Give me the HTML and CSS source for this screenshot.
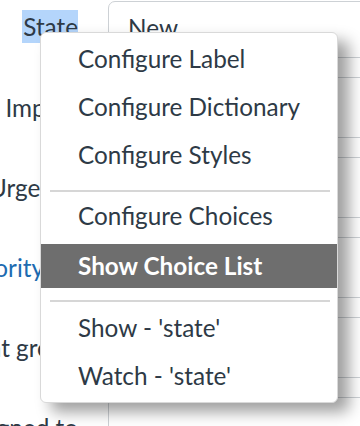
FILE: index.html
```html
<!DOCTYPE html>
<html>
  <head>
    <title>Form Context Menu</title>
    <link rel="stylesheet" href="styles.css">
  </head>
  <body>
    <div class="form">
      <div class="form-row first-row">
        <div class="field-label"><span class="selected-text">State</span></div>
        <div class="field-box">New</div>
      </div>
      <div class="form-row">
        <div class="field-label">Impact</div>
        <div class="field-box">3 - Low</div>
      </div>
      <div class="form-row">
        <div class="field-label">Urgency</div>
        <div class="field-box">3 - Low</div>
      </div>
      <div class="form-row">
        <div class="field-label is-link">Priority</div>
        <div class="field-box">5 - Planning</div>
      </div>
      <div class="form-row">
        <div class="field-label">Assignment group</div>
        <div class="field-box"></div>
      </div>
      <div class="form-row">
        <div class="field-label">Assigned to</div>
        <div class="field-box"></div>
      </div>
    </div>

    <div class="context-menu">
      <div class="menu-item">Configure Label</div>
      <div class="menu-item">Configure Dictionary</div>
      <div class="menu-item">Configure Styles</div>
      <div class="menu-separator"></div>
      <div class="menu-item">Configure Choices</div>
      <div class="menu-item is-active">Show Choice List</div>
      <div class="menu-separator second-separator"></div>
      <div class="menu-item">Show - 'state'</div>
      <div class="menu-item">Watch - 'state'</div>
    </div>
  </body>
</html>
```

FILE: styles.css
```css
body {
  margin: 0;
  font-family: Lato, "Open Sans", Arial, sans-serif;
  background-color: white;
  overflow: hidden;
}
.form {
  display: flex;
  flex-direction: column;
  gap: 19px;
  padding-top: 1px;
}
.form-row {
  display: flex;
  align-items: center;
  height: 61px;
}
.first-row {
  height: 57px;
}
.first-row .field-label {
  align-self: flex-start;
  margin-top: 9px;
}
.field-label {
  box-sizing: border-box;
  width: 78px;
  flex-shrink: 0;
  display: flex;
  justify-content: flex-end;
  white-space: nowrap;
  font-size: 24.3px;
  line-height: 33px;
  color: #2e3a46;
}
.is-link {
  color: #1d6bb1;
  padding-right: 34px;
}
.selected-text {
  background-color: #b4d5fb;
  padding-left: 1px;
}
.field-box {
  box-sizing: border-box;
  margin-left: 30px;
  width: 280px;
  height: 100%;
  flex-shrink: 0;
  border: 1px solid #cdd1d5;
  border-radius: 7px;
  padding: 11px 19px;
  font-size: 24.3px;
  color: #2e3a46;
}
.context-menu {
  position: absolute;
  left: 40px;
  top: 32px;
  width: 298px;
  box-sizing: border-box;
  padding: 2px 0;
  background-color: white;
  border: 1px solid #d9d9d9;
  border-radius: 6px;
  box-shadow: 11px 9px 15px rgba(0, 0, 0, 0.38);
}
.menu-item {
  height: 48px;
  line-height: 48px;
  padding-left: 37px;
  font-size: 24.3px;
  color: #2e3a46;
  white-space: nowrap;
}
.is-active {
  margin-top: 4px;
  height: 44px;
  line-height: 44px;
  background-color: #6e6e6e;
  color: white;
  font-weight: bold;
}
.menu-separator {
  height: 2px;
  margin: 11px 7px 0 9px;
  background-color: #d6d6d6;
}
.second-separator {
  margin-top: 12px;
  margin-bottom: 2px;
}
```
